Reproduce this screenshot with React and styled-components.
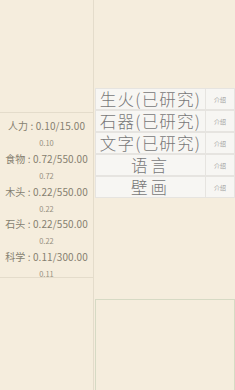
import React from 'react'
import styled, { createGlobalStyle } from 'styled-components'

const GlobalStyle = createGlobalStyle`
	html, body {
		margin: 0;
		padding: 0;
		background: #f5eddd;
	}
	body {
		font-family: "Noto Sans CJK SC", "Noto Sans", sans-serif;
		color: #777;
	}
`

const Page = styled.div`
	display: flex;
	width: 235px;
	height: 390px;
	overflow: hidden;
	background: #f5eddd;
`

const LeftColumn = styled.div`
	width: 93px;
	flex-shrink: 0;
	border-right: 1px solid #e4dccb;
	display: flex;
	flex-direction: column;
`

const Spacer = styled.div`
	height: ${(p) => p.h}px;
	flex-shrink: 0;
	border-bottom: ${(p) => (p.$line ? '1px solid #e4dccb' : 'none')};
`

const StatList = styled.div`
	border-bottom: 1px solid #e4dccb;
	padding: 4px 0 0;
	display: flex;
	flex-direction: column;
	gap: 3.75px;
`

const StatItem = styled.div`
	display: flex;
	flex-direction: column;
	align-items: center;
	text-align: center;
`

const StatMain = styled.div`
	font-size: 10px;
	line-height: 18px;
	color: #857f70;
	white-space: nowrap;
	letter-spacing: 0.1px;
`

const StatSub = styled.div`
	font-size: 7.5px;
	line-height: 6px;
	margin-top: 5px;
	color: #95907f;
`

const RightColumn = styled.div`
	flex: 1;
	display: flex;
	flex-direction: column;
`

const ButtonList = styled.div`
	display: flex;
	flex-direction: column;
	margin-left: 1px;
`

const ButtonRow = styled.div`
	display: flex;
	height: 22px;
`

const MainButton = styled.div`
	width: 111px;
	box-sizing: border-box;
	border: 1px solid #e6e4e0;
	background: #f7f6f3;
	display: flex;
	align-items: center;
	justify-content: center;
	font-size: 16.5px;
	letter-spacing: ${(p) => (p.$wide ? '3px' : '1.2px')};
	color: #787878;
	font-weight: 300;
	white-space: nowrap;
`

const IntroButton = styled.div`
	flex: 1;
	box-sizing: border-box;
	border: 1px solid #e6e4e0;
	border-left: none;
	background: #f7f6f3;
	display: flex;
	align-items: center;
	justify-content: center;
	font-size: 6px;
	color: #a0a0a0;
`

const BottomPanel = styled.div`
	flex: 1;
	margin-left: 1px;
	border-top: 1px solid #d6dac4;
	border-left: 1px solid #d6dac4;
	border-right: 1px solid #d6dac4;
`

const stats = [
	{ name: '人力', value: '0.10/15.00', rate: '0.10' },
	{ name: '食物', value: '0.72/550.00', rate: '0.72' },
	{ name: '木头', value: '0.22/550.00', rate: '0.22' },
	{ name: '石头', value: '0.22/550.00', rate: '0.22' },
	{ name: '科学', value: '0.11/300.00', rate: '0.11' },
]

const techs = [
	{ label: '生火(已研究)' },
	{ label: '石器(已研究)' },
	{ label: '文字(已研究)' },
	{ label: '语言', wide: true },
	{ label: '壁画', wide: true },
]

const App = () => (
	<>
		<GlobalStyle />
		<Page>
			<LeftColumn>
				<Spacer h={112} $line />
				<StatList>
					{stats.map((s) => (
						<StatItem key={s.name}>
							<StatMain>
								{s.name} : {s.value}
							</StatMain>
							<StatSub>{s.rate}</StatSub>
						</StatItem>
					))}
				</StatList>
			</LeftColumn>
			<RightColumn>
				<Spacer h={88} />
				<ButtonList>
					{techs.map((t) => (
						<ButtonRow key={t.label}>
							<MainButton $wide={t.wide}>{t.label}</MainButton>
							<IntroButton>介绍</IntroButton>
						</ButtonRow>
					))}
				</ButtonList>
				<Spacer h={101} />
				<BottomPanel />
			</RightColumn>
		</Page>
	</>
)

export default App
